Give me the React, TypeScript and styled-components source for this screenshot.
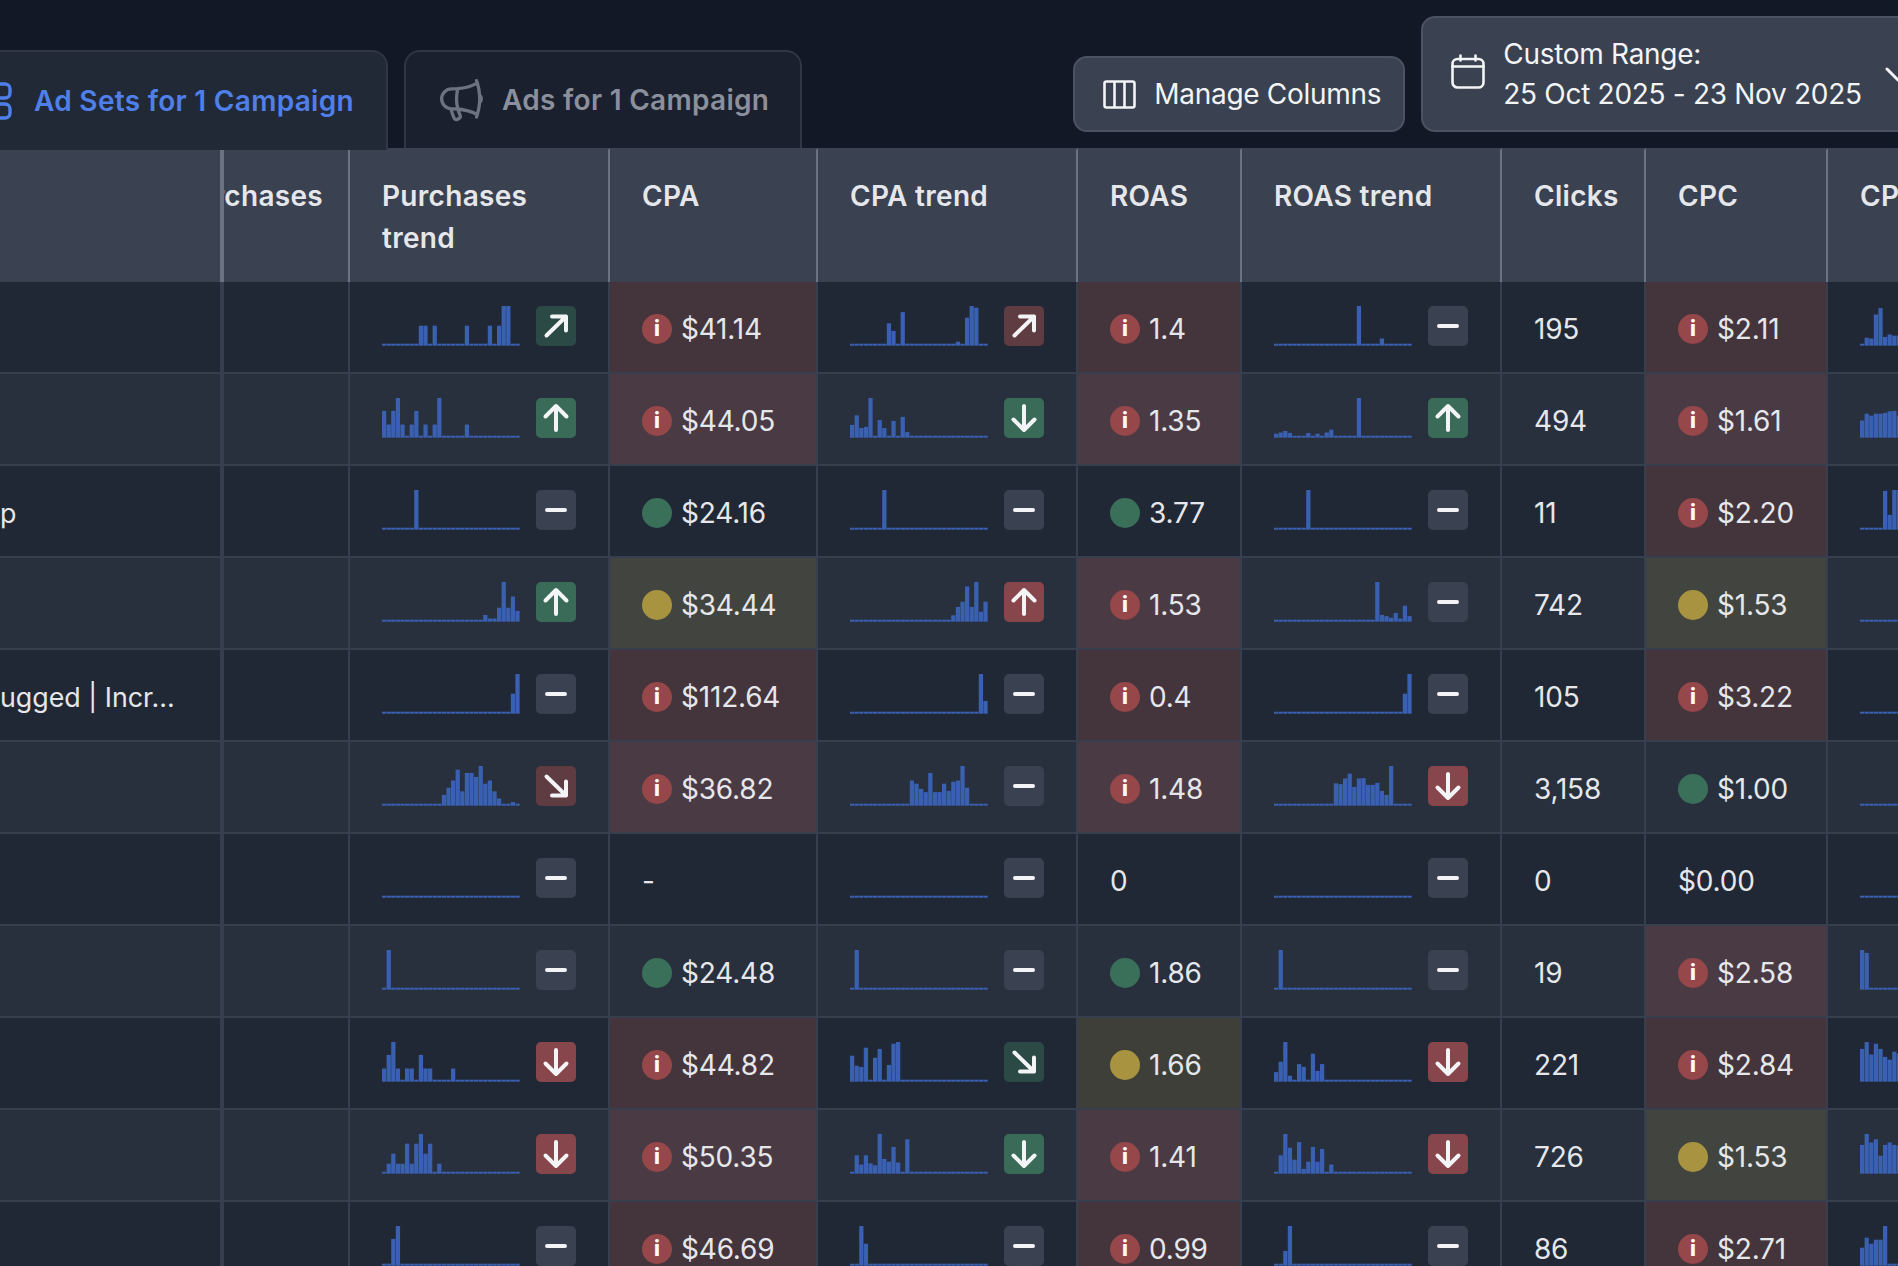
import React from "react";
import styled, { createGlobalStyle } from "styled-components";

const Global = createGlobalStyle`
  html, body { margin: 0; padding: 0; background: #111827; overflow: hidden; }
  body { font-family: "Inter", "Liberation Sans", sans-serif; color: #e5e7eb; }
`;

const COLUMNS = "224px 126px 260px 208px 260px 164px 260px 144px 182px 1fr";

const Page = styled.div`
  width: 1898px;
  height: 1266px;
  overflow: hidden;
  background: #121826;
`;

const Toolbar = styled.div`
  display: flex;
  align-items: flex-end;
  height: 148px;
`;

const Tabs = styled.div`
  display: flex;
  align-items: flex-end;
  gap: 16px;
  margin-left: -60px;
  flex-shrink: 0;
`;

const Tab = styled.div<{ $active?: boolean }>`
  position: relative;
  z-index: 1;
  display: flex;
  align-items: center;
  gap: ${(p) => (p.$active ? "22px" : "21px")};
  box-sizing: border-box;
  height: ${(p) => (p.$active ? "100px" : "98px")};
  margin-bottom: ${(p) => (p.$active ? "-2px" : "0")};
  padding: ${(p) => (p.$active ? "0 32px 0 34px" : "0 31px 0 36px")};
  background: ${(p) => (p.$active ? "#222936" : "#1a202d")};
  border: 2px solid #2f3644;
  border-bottom: none;
  border-radius: 16px 16px 0 0;
  font-size: 28px;
  line-height: 42px;
  font-weight: 600;
  letter-spacing: 0.3px;
  color: ${(p) => (p.$active ? "#4f80ea" : "#8b909c")};
  white-space: nowrap;
`;

const Actions = styled.div`
  display: flex;
  align-items: flex-end;
  gap: 16px;
  margin-left: 271px;
  padding-bottom: 16px;
  flex-shrink: 0;
`;

const ActionButton = styled.div`
  display: flex;
  align-items: center;
  box-sizing: border-box;
  background: #3a4150;
  border: 2px solid #4b5262;
  border-radius: 14px;
  color: #f3f4f6;
  font-size: 28px;
  letter-spacing: -0.3px;
  line-height: 40px;
  flex-shrink: 0;
`;

const ManageButton = styled(ActionButton)`
  height: 76px;
  width: 332px;
  padding-left: 28px;
  gap: 18px;
`;

const DateButton = styled(ActionButton)`
  height: 116px;
  width: 520px;
  padding-left: 28px;
  gap: 18px;
`;

const DateText = styled.div`
  display: flex;
  flex-direction: column;
  white-space: nowrap;
`;

const Chevron = styled.svg`
  margin-left: 4px;
  flex-shrink: 0;
`;

const HeaderRow = styled.div`
  display: grid;
  grid-template-columns: ${COLUMNS};
  height: 134px;
  background: #3a4150;
`;

const HeaderCell = styled.div<{ $clip?: boolean; $sticky?: boolean }>`
  box-sizing: border-box;
  display: flex;
  justify-content: ${(p) => (p.$clip ? "flex-end" : "flex-start")};
  padding: 25px ${(p) => (p.$clip ? "25px" : "0")} 0 ${(p) => (p.$clip ? "0" : "32px")};
  overflow: hidden;
  font-size: 28px;
  line-height: 42px;
  font-weight: 600;
  letter-spacing: 0.3px;
  color: #e5e7eb;
  border-top: 2px solid #3a4150;
  border-right: ${(p) => (p.$sticky ? "4px" : "2px")} solid #6b7280;
  &:last-child { border-right: none; }
`;

const HeaderLabel = styled.span`
  flex-shrink: 0;
`;

const TrendHeaderLabel = styled.span`
  display: block;
  max-width: 190px;
`;

const Row = styled.div<{ $even: boolean }>`
  display: grid;
  grid-template-columns: ${COLUMNS};
  height: 92px;
  background: ${(p) => (p.$even ? "#282f3d" : "#212835")};
`;

const Cell = styled.div`
  box-sizing: border-box;
  display: flex;
  border-right: 2px solid #373e4d;
  border-bottom: 2px solid #373e4d;
  overflow: hidden;
  &:last-child { border-right: none; }
`;

const NameCell = styled(Cell)`
  align-items: center;
  padding-top: 4px;
  border-right-width: 4px;
  font-size: 26.8px;
  line-height: 42px;
  color: #e5e7eb;
  white-space: nowrap;
`;

type Status = "red" | "yellow" | "green" | undefined;

const tint = (status: Status, even: boolean) => {
  if (status === "red") return even ? "#4a3a44" : "#44343c";
  if (status === "yellow") return even ? "#42443f" : "#3e3f38";
  return "transparent";
};

const ValueCell = styled(Cell)<{ $status?: Status; $even: boolean }>`
  align-items: center;
  gap: 9px;
  padding: 4px 0 0 32px;
  font-size: 28px;
  letter-spacing: -0.2px;
  line-height: 42px;
  color: #e5e7eb;
  white-space: nowrap;
  background: ${(p) => tint(p.$status, p.$even)};
`;

const TrendCell = styled(Cell)`
  align-items: flex-start;
  gap: 16px;
  padding: 24px 0 0 32px;
`;

const dotColor: Record<string, string> = { red: "#964749", yellow: "#a89440", green: "#3a7059" };

const Dot = styled.span<{ $status: string }>`
  display: flex;
  align-items: center;
  justify-content: center;
  width: 30px;
  height: 30px;
  border-radius: 50%;
  flex-shrink: 0;
  background: ${(p) => dotColor[p.$status]};
  color: #f9fafb;
  font-size: 21px;
  letter-spacing: 0;
  line-height: 30px;
  font-weight: 800;
`;

type Trend = "up" | "down" | "upRight" | "downRight" | "flat";
type Tone = "green" | "red" | "darkGreen" | "darkRed" | "neutral";

const toneColor: Record<Tone, string> = {
  green: "#3a6b59",
  red: "#87464b",
  darkGreen: "#2c4a45",
  darkRed: "#5f3b42",
  neutral: "#3a4150",
};

const Badge = styled.span<{ $tone: Tone }>`
  display: flex;
  width: 40px;
  height: 40px;
  border-radius: 5px;
  flex-shrink: 0;
  background: ${(p) => toneColor[p.$tone]};
`;

const arrowPaths: Record<Trend, string> = {
  up: "M20 32V8M9.5 18.5L20 8l10.5 10.5",
  down: "M20 8v24M9.5 21.5L20 32l10.5-10.5",
  upRight: "M10.5 29.5L30 10.5M16 10.5h14v14",
  downRight: "M10.5 10.5L30 29.5M16 29.5h14v-14",
  flat: "M11 20h18",
};

const TrendBadge = ({ trend, tone }: { trend: Trend; tone: Tone }) => (
  <Badge $tone={tone}>
    <svg width="40" height="40" viewBox="0 0 40 40" fill="none" stroke="#f3f4f6" strokeWidth="4" strokeLinecap="round" strokeLinejoin="round">
      <path d={arrowPaths[trend]} />
    </svg>
  </Badge>
);

const SparkSvg = styled.svg`
  flex-shrink: 0;
`;

const Spark = ({ bars }: { bars: number[] }) => (
  <SparkSvg width="138" height="40" viewBox="0 0 138 40">
    {Array.from({ length: 30 }, (_, i) => {
      const h = Math.max(2, (bars[i] || 0) * 40);
      return <rect key={i} x={i * 4.6} y={39.7 - h} width={4.25} height={h} fill="#3a60b1" />;
    })}
  </SparkSvg>
);

const at = (start: number, values: number[]) => {
  const out = new Array(30).fill(0);
  values.forEach((v, i) => { out[start + i] = v; });
  return out;
};

const NONE = at(0, []);

type T = [Trend, Tone];
const FLAT: T = ["flat", "neutral"];
const UP_G: T = ["up", "green"];
const UP_R: T = ["up", "red"];
const DN_G: T = ["down", "green"];
const DN_R: T = ["down", "red"];
const UR_G: T = ["upRight", "darkGreen"];
const UR_R: T = ["upRight", "darkRed"];
const DR_G: T = ["downRight", "darkGreen"];
const DR_R: T = ["downRight", "darkRed"];

interface Metric { text: string; status?: Status }
interface RowData {
  name?: string;
  purchases: number[];
  purchasesTrend: T;
  cpa: Metric;
  cpaBars: number[];
  cpaTrend: T;
  roas: Metric;
  roasBars: number[];
  roasTrend: T;
  clicks: string;
  cpc: Metric;
  last: number[];
}

const rows: RowData[] = [
  {
    purchases: at(8, [.5, .5, 0, .5, 0, 0, 0, 0, 0, 0, .5, 0, 0, 0, 0, .5, 0, .5, 1, 1]),
    purchasesTrend: UR_G,
    cpa: { text: "$41.14", status: "red" },
    cpaBars: at(8, [.56, .37, 0, .84, 0, 0, 0, 0, 0, 0, 0, 0, 0, 0, 0, .1, 0, .7, 1, .95]),
    cpaTrend: UR_R,
    roas: { text: "1.4", status: "red" },
    roasBars: at(18, [1, 0, 0, 0, 0, .18, 0, .05]),
    roasTrend: FLAT,
    clicks: "195",
    cpc: { text: "$2.11", status: "red" },
    last: [0, .2, .18, .78, .94, .22, .28, .25, .25],
  },
  {
    purchases: [.67, .33, .67, 1, .33, 0, .33, .67, 0, .33, 0, .33, 1, 0, 0, 0, 0, 0, .33],
    purchasesTrend: UP_G,
    cpa: { text: "$44.05", status: "red" },
    cpaBars: [.32, .56, .24, .27, 1, 0, .44, .24, 0, .42, 0, .52, .14],
    cpaTrend: DN_G,
    roas: { text: "1.35", status: "red" },
    roasBars: [.1, .13, .17, .12, 0, .04, 0, .12, 0, .1, 0, .13, .2, 0, 0, 0, 0, 0, 1],
    roasTrend: UP_G,
    clicks: "494",
    cpc: { text: "$1.61", status: "red" },
    last: [.43, .6, .55, .6, .6, .62, .66, .67, .55],
  },
  {
    name: "p",
    purchases: at(7, [1]),
    purchasesTrend: FLAT,
    cpa: { text: "$24.16", status: "green" },
    cpaBars: at(7, [1]),
    cpaTrend: FLAT,
    roas: { text: "3.77", status: "green" },
    roasBars: at(7, [1]),
    roasTrend: FLAT,
    clicks: "11",
    cpc: { text: "$2.20", status: "red" },
    last: at(5, [.97, .37, 1, 1]),
  },
  {
    purchases: at(22, [.17, .08, .08, .35, 1, .35, .63, .27]),
    purchasesTrend: UP_G,
    cpa: { text: "$34.44", status: "yellow" },
    cpaBars: at(22, [.16, .37, .5, .88, .37, 1, .25, .5]),
    cpaTrend: UP_R,
    roas: { text: "1.53", status: "red" },
    roasBars: at(22, [1, .17, .14, .1, .22, .08, .4, .14]),
    roasTrend: FLAT,
    clicks: "742",
    cpc: { text: "$1.53", status: "yellow" },
    last: NONE,
  },
  {
    name: "ugged | Incr...",
    purchases: at(28, [.5, 1]),
    purchasesTrend: FLAT,
    cpa: { text: "$112.64", status: "red" },
    cpaBars: at(28, [1, .32]),
    cpaTrend: FLAT,
    roas: { text: "0.4", status: "red" },
    roasBars: at(28, [.5, 1]),
    roasTrend: FLAT,
    clicks: "105",
    cpc: { text: "$3.22", status: "red" },
    last: NONE,
  },
  {
    purchases: at(13, [.27, .45, .63, .9, .36, .82, .82, .72, 1, .55, .63, .36, .18, 0, 0, .09]),
    purchasesTrend: DR_R,
    cpa: { text: "$36.82", status: "red" },
    cpaBars: at(13, [.63, .55, .42, .34, .82, .34, .34, .55, .37, .6, .63, 1, .45]),
    cpaTrend: FLAT,
    roas: { text: "1.48", status: "red" },
    roasBars: at(13, [.56, .54, .68, .8, .47, .68, .69, .52, .52, .57, .37, .27, 1]),
    roasTrend: DN_R,
    clicks: "3,158",
    cpc: { text: "$1.00", status: "green" },
    last: NONE,
  },
  {
    purchases: NONE,
    purchasesTrend: FLAT,
    cpa: { text: "-" },
    cpaBars: NONE,
    cpaTrend: FLAT,
    roas: { text: "0" },
    roasBars: NONE,
    roasTrend: FLAT,
    clicks: "0",
    cpc: { text: "$0.00" },
    last: NONE,
  },
  {
    purchases: at(1, [1]),
    purchasesTrend: FLAT,
    cpa: { text: "$24.48", status: "green" },
    cpaBars: at(1, [1]),
    cpaTrend: FLAT,
    roas: { text: "1.86", status: "green" },
    roasBars: at(1, [1]),
    roasTrend: FLAT,
    clicks: "19",
    cpc: { text: "$2.58", status: "red" },
    last: [1, .92],
  },
  {
    purchases: [.33, .67, 1, .33, 0, .33, .33, 0, .67, .33, .33, 0, 0, 0, 0, .33],
    purchasesTrend: DN_R,
    cpa: { text: "$44.82", status: "red" },
    cpaBars: [.65, .4, .37, .85, 0, .6, .82, 0, .42, .95, 1],
    cpaTrend: DR_G,
    roas: { text: "1.66", status: "yellow" },
    roasBars: [.24, .5, 1, .15, 0, .44, .37, 0, .7, .27, .44],
    roasTrend: DN_R,
    clicks: "221",
    cpc: { text: "$2.84", status: "red" },
    last: [.82, 1, .68, .95, .82, .62, .55, .75, .7],
  },
  {
    purchases: [0, .25, .5, .25, .25, .75, .25, .75, 1, .5, .75, 0, .25],
    purchasesTrend: DN_R,
    cpa: { text: "$50.35", status: "red" },
    cpaBars: [0, .46, .23, .46, .26, .21, 1, .37, .3, .67, .28, 0, .86],
    cpaTrend: DN_G,
    roas: { text: "1.41", status: "red" },
    roasBars: [0, .46, 1, .65, .35, .79, .12, .3, .67, .3, .62, 0, .23],
    roasTrend: DN_R,
    clicks: "726",
    cpc: { text: "$1.53", status: "yellow" },
    last: [.72, 1, .78, .86, .45, .72, .78, .72, .7],
  },
  {
    purchases: at(2, [.67, 1]),
    purchasesTrend: FLAT,
    cpa: { text: "$46.69", status: "red" },
    cpaBars: at(2, [1, .55]),
    cpaTrend: FLAT,
    roas: { text: "0.99", status: "red" },
    roasBars: at(2, [.37, 1]),
    roasTrend: FLAT,
    clicks: "86",
    cpc: { text: "$2.71", status: "red" },
    last: [.45, .7, .55, .65, .65, 1],
  },
];

const MetricCell = ({ metric, even }: { metric: Metric; even: boolean }) => (
  <ValueCell $status={metric.status} $even={even}>
    {metric.status && <Dot $status={metric.status}>{metric.status === "red" ? "i" : ""}</Dot>}
    {metric.text}
  </ValueCell>
);

const TrendGroup = ({ bars, trend }: { bars: number[]; trend: T }) => (
  <TrendCell>
    <Spark bars={bars} />
    <TrendBadge trend={trend[0]} tone={trend[1]} />
  </TrendCell>
);

const AdSetIcon = () => (
  <svg width="36" height="38" viewBox="0 0 36 38" fill="none" stroke="#4f80ea" strokeWidth="3.4" style={{ flexShrink: 0 }}>
    <rect x="2" y="2" width="32" height="14" rx="5" />
    <rect x="2" y="22" width="32" height="14" rx="5" />
  </svg>
);

const MegaphoneIcon = () => (
  <svg width="53" height="53" viewBox="0 0 24 24" fill="none" stroke="#6b7280" strokeWidth="1.5" strokeLinecap="round" strokeLinejoin="round" style={{ flexShrink: 0, margin: "0 -7px" }}>
    <path d="M10.34 15.84c-.688-.06-1.386-.09-2.09-.09H7.5a4.5 4.5 0 1 1 0-9h.75c.704 0 1.402-.03 2.09-.09m0 9.18c.253.962.584 1.892.985 2.783.247.55.06 1.21-.463 1.511l-.657.38c-.551.318-1.26.117-1.527-.461a20.845 20.845 0 0 1-1.44-4.282m3.102.069a18.03 18.03 0 0 1-.59-4.59c0-1.586.205-3.124.59-4.59m0 9.18a23.848 23.848 0 0 1 8.835 2.535M10.34 6.66a23.847 23.847 0 0 0 8.835-2.535m0 0A23.74 23.74 0 0 0 18.795 3m.38 1.125a23.91 23.91 0 0 1 1.014 5.395m-1.014 8.855c-.118.38-.245.754-.38 1.125m.38-1.125a23.91 23.91 0 0 0 1.014-5.395m0-3.46c.495.413.811 1.035.811 1.73 0 .695-.316 1.317-.811 1.73m0-3.46a24.347 24.347 0 0 1 0 3.46" />
  </svg>
);

const ColumnsIcon = () => (
  <svg width="33" height="29" viewBox="0 0 33 29" fill="none" stroke="#f3f4f6" strokeWidth="2.6" strokeLinejoin="round" style={{ flexShrink: 0 }}>
    <rect x="1.5" y="1.5" width="30" height="26" rx="2" />
    <path d="M11.5 1.5v26M21.5 1.5v26" />
  </svg>
);

const CalendarIcon = () => (
  <svg width="34" height="35" viewBox="0 0 34 35" fill="none" stroke="#f3f4f6" strokeWidth="2.6" strokeLinecap="round" style={{ flexShrink: 0, marginBottom: "6px" }}>
    <rect x="1.5" y="5" width="31" height="28.5" rx="5" />
    <path d="M1.5 12.5h31M9.5 1.5v5M24.5 1.5v5" />
  </svg>
);

export default function App() {
  return (
    <Page>
      <Global />
      <Toolbar>
        <Tabs>
          <Tab $active>
            <AdSetIcon />
            Ad Sets for 1 Campaign
          </Tab>
          <Tab>
            <MegaphoneIcon />
            Ads for 1 Campaign
          </Tab>
        </Tabs>
        <Actions>
          <ManageButton>
            <ColumnsIcon />
            Manage Columns
          </ManageButton>
          <DateButton>
            <CalendarIcon />
            <DateText>
              <span>Custom Range:</span>
              <span>25 Oct 2025 - 23 Nov 2025</span>
            </DateText>
            <Chevron width="28" height="28" viewBox="0 0 28 28" fill="none" stroke="#f3f4f6" strokeWidth="3" strokeLinecap="round" strokeLinejoin="round">
              <path d="M3 9l11 11 11-11" />
            </Chevron>
          </DateButton>
        </Actions>
      </Toolbar>
      <HeaderRow>
        <HeaderCell $sticky />
        <HeaderCell $clip><HeaderLabel>Purchases</HeaderLabel></HeaderCell>
        <HeaderCell><TrendHeaderLabel>Purchases trend</TrendHeaderLabel></HeaderCell>
        <HeaderCell>CPA</HeaderCell>
        <HeaderCell>CPA trend</HeaderCell>
        <HeaderCell>ROAS</HeaderCell>
        <HeaderCell>ROAS trend</HeaderCell>
        <HeaderCell>Clicks</HeaderCell>
        <HeaderCell>CPC</HeaderCell>
        <HeaderCell><HeaderLabel>CPC trend</HeaderLabel></HeaderCell>
      </HeaderRow>
      {rows.map((r, i) => {
        const even = i % 2 === 1;
        return (
          <Row key={i} $even={even}>
            <NameCell>{r.name}</NameCell>
            <Cell />
            <TrendGroup bars={r.purchases} trend={r.purchasesTrend} />
            <MetricCell metric={r.cpa} even={even} />
            <TrendGroup bars={r.cpaBars} trend={r.cpaTrend} />
            <MetricCell metric={r.roas} even={even} />
            <TrendGroup bars={r.roasBars} trend={r.roasTrend} />
            <ValueCell $even={even}>{r.clicks}</ValueCell>
            <MetricCell metric={r.cpc} even={even} />
            <TrendCell><Spark bars={r.last} /></TrendCell>
          </Row>
        );
      })}
    </Page>
  );
}
